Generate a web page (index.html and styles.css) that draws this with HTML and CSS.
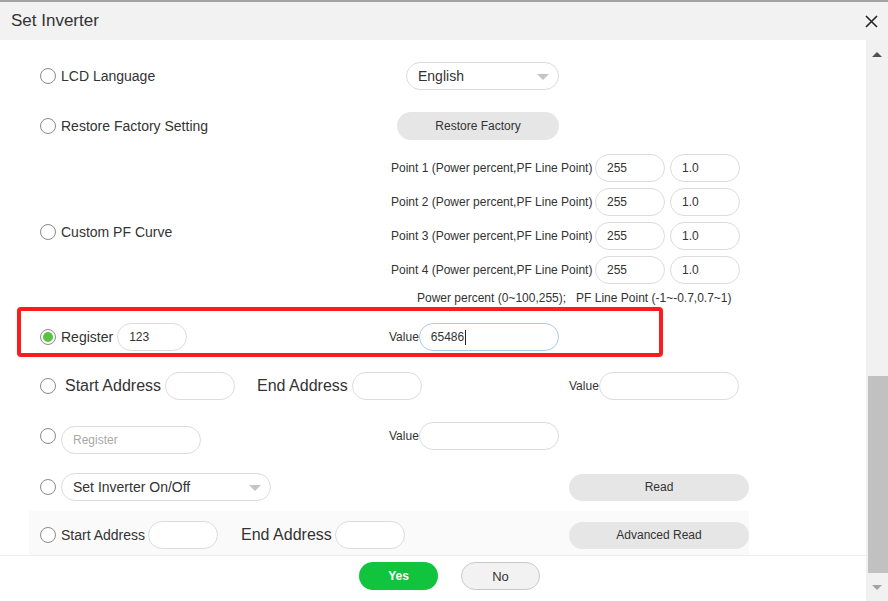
FILE: index.html
```html
<!DOCTYPE html>
<html>
<head>
<meta charset="utf-8">
<link rel="stylesheet" href="styles.css">
</head>
<body>
<div class="dialog">
  <div class="topline"></div>
  <div class="header">
    <span class="title">Set Inverter</span>
    <svg class="close" width="13" height="13" viewBox="0 0 13 13"><path d="M1 1L12 12M12 1L1 12" stroke="#222" stroke-width="1.6" fill="none"/></svg>
  </div>
  <div class="body">
    <div class="panel">
      <div class="viewport">
        <div class="list">
          <div class="row h50">
            <div class="lead"></div>
            <div class="pill w152 ml17"></div>
          </div>
          <div class="row h50">
            <div class="lead"><span class="radio"></span><span class="lbl">LCD Language</span></div>
            <div class="pill select w152 ml17"><span>English</span><i class="caret"></i></div>
          </div>
          <div class="row h50">
            <div class="lead"><span class="radio"></span><span class="lbl">Restore Factory Setting</span></div>
            <div class="btn w161 ml8">Restore Factory</div>
          </div>
          <div class="row pf">
            <div class="lead"><span class="radio"></span><span class="lbl">Custom PF Curve</span></div>
            <div class="points">
              <div class="point"><span class="plbl">Point 1 (Power percent,PF Line Point)</span><div class="pill w70 ml3">255</div><div class="pill w70 ml5">1.0</div></div>
              <div class="point"><span class="plbl">Point 2 (Power percent,PF Line Point)</span><div class="pill w70 ml3">255</div><div class="pill w70 ml5">1.0</div></div>
              <div class="point"><span class="plbl">Point 3 (Power percent,PF Line Point)</span><div class="pill w70 ml3">255</div><div class="pill w70 ml5">1.0</div></div>
              <div class="point"><span class="plbl">Point 4 (Power percent,PF Line Point)</span><div class="pill w70 ml3">255</div><div class="pill w70 ml5">1.0</div></div>
              <div class="note">Power percent (0~100,255);&nbsp;&nbsp;&nbsp;PF Line Point (-1~-0.7,0.7~1)</div>
            </div>
          </div>
          <div class="row h48">
            <div class="lead"><span class="radio on"></span><span class="lbl">Register</span><div class="pill w70 ml4">123</div></div>
            <span class="vlbl">Value</span><div class="pill focus w140"><span>65486</span><i class="cursor"></i></div>
          </div>
          <div class="row h48 shift">
            <div class="lead wide"><span class="radio"></span><span class="lbl big ml9">Start Address</span><div class="pill w70 ml4">&nbsp;</div><span class="lbl big ml22">End Address</span><div class="pill w70 ml4"></div></div>
            <span class="vlbl">Value</span><div class="pill w140"></div>
          </div>
          <div class="row h54">
            <div class="lead"><span class="radio"></span><div class="pill w140 ml5 low ph">Register</div></div>
            <span class="vlbl">Value</span><div class="pill w140"></div>
          </div>
          <div class="row h48">
            <div class="lead wide"><span class="radio"></span><div class="pill select w210 ml5"><span>Set Inverter On/Off</span><i class="caret"></i></div></div>
            <div class="btn w180 short">Read</div>
          </div>
          <div class="row h48 hover">
            <div class="lead wide"><span class="radio"></span><span class="lbl">Start Address</span><div class="pill w70 ml3"></div><span class="lbl big ml23">End Address</span><div class="pill w70 ml3"></div></div>
            <div class="btn w180 short">Advanced Read</div>
          </div>
        </div>
        <div class="mark"></div>
      </div>
      <div class="footer">
        <div class="yes">Yes</div>
        <div class="no">No</div>
      </div>
    </div>
    <div class="scrollbar">
      <div class="sb-up"><i class="tri-up"></i></div>
      <div class="sb-track"><div class="sb-thumb"></div></div>
      <div class="sb-down"><i class="tri-down"></i></div>
    </div>
  </div>
</div>
</body>
</html>
```

FILE: styles.css
```css
html, body {
  margin: 0;
  padding: 0;
  background: #fff;
}
body {
  width: 888px;
  height: 601px;
  overflow: hidden;
  font-family: "Liberation Sans", Arial, sans-serif;
  color: #333;
}
.dialog {
  width: 888px;
  height: 601px;
  display: flex;
  flex-direction: column;
}
.topline {
  height: 2px;
  background: #a3a3a3;
}
.header {
  height: 38px;
  background: #f2f2f2;
  display: flex;
  align-items: center;
  justify-content: space-between;
  padding: 0 10px 0 11px;
}
.title {
  font-size: 17px;
  color: #333;
}
.close {
  display: block;
}
.body {
  flex: 1;
  display: flex;
  min-height: 0;
}
.panel {
  width: 866px;
  display: flex;
  flex-direction: column;
}
.viewport {
  height: 515px;
  overflow: hidden;
  position: relative;
}
.list {
  margin-top: -39px;
}
.row {
  display: flex;
  align-items: center;
  margin-left: 29px;
  width: 720px;
  padding-left: 11px;
  box-sizing: border-box;
}
.h50 { height: 50px; }
.h48 { height: 48px; }
.h54 { height: 54px; }
.pf { height: 162px; }
.shift { padding-top: 2px; }
.hover { background: #fafafa; }
.lead {
  width: 349px;
  flex: none;
  display: flex;
  align-items: center;
}
.lead.wide { width: 529px; }
.radio {
  width: 14px;
  height: 14px;
  border: 1px solid #8a8a8a;
  border-radius: 50%;
  background: #fff;
  flex: none;
  margin-right: 5px;
  position: relative;
}
.radio.on::after {
  content: "";
  position: absolute;
  left: 2px;
  top: 2px;
  width: 10px;
  height: 10px;
  border-radius: 50%;
  background: #58c242;
}
.lbl {
  font-size: 14px;
  color: #333;
  white-space: nowrap;
}
.lbl.big { font-size: 16px; }
.ml3 { margin-left: 3px; }
.ml4 { margin-left: 4px; }
.ml5 { margin-left: 5px; }
.ml8 { margin-left: 8px; }
.ml9 { margin-left: 9px; }
.ml17 { margin-left: 17px; }
.ml22 { margin-left: 22px; }
.ml23 { margin-left: 23px; }
.radio + .ml9 { margin-left: 4px; }
.radio + .ml5 { margin-left: 0; }
.pill {
  height: 28px;
  box-sizing: border-box;
  border: 1px solid #dcdcdc;
  border-radius: 14px;
  background: #fff;
  font-size: 12px;
  color: #333;
  padding-left: 11px;
  display: flex;
  align-items: center;
  flex: none;
  position: relative;
}
.pill.focus { border-color: #a9cbe6; }
.pill.ph { color: #a9a9a9; }
.pill.low { margin-top: 8px; }
.select { font-size: 14px; }
.w70 { width: 70px; }
.w140 { width: 140px; }
.w152 { width: 153px; }
.w161 { width: 162px; }
.w180 { width: 180px; }
.w210 { width: 210px; }
.caret {
  position: absolute;
  right: 9px;
  top: 11px;
  width: 0;
  height: 0;
  border-left: 6px solid transparent;
  border-right: 6px solid transparent;
  border-top: 6px solid #c4c4c4;
}
.cursor {
  display: inline-block;
  width: 1px;
  height: 15px;
  background: #222;
  margin-left: 1px;
}
.btn {
  height: 28px;
  border-radius: 14px;
  background: #e6e6e6;
  font-size: 12px;
  color: #333;
  display: flex;
  align-items: center;
  justify-content: center;
  flex: none;
}
.btn.short { height: 27px; }
.points {
  display: flex;
  flex-direction: column;
  padding-top: 3px;
  align-self: flex-start;
}
.point {
  display: flex;
  align-items: center;
  height: 28px;
  margin-bottom: 6px;
  margin-left: 2px;
}
.plbl {
  font-size: 12px;
  color: #333;
  white-space: nowrap;
  width: 201px;
}
.note {
  font-size: 12px;
  color: #333;
  margin-left: 28px;
  margin-top: 1px;
  white-space: nowrap;
}
.vlbl {
  font-size: 12px;
  color: #333;
}
.mark {
  position: absolute;
  left: 17px;
  top: 267px;
  width: 638px;
  height: 42px;
  border: 4px solid #fb1d1d;
  border-radius: 4px;
}
.footer {
  height: 46px;
  box-sizing: border-box;
  border-top: 1px solid #ececec;
  display: flex;
  justify-content: center;
  align-items: flex-start;
  padding: 6px 0 0 33px;
  gap: 23px;
}
.yes, .no {
  width: 79px;
  height: 28px;
  box-sizing: border-box;
  border-radius: 14px;
  display: flex;
  align-items: center;
  justify-content: center;
}
.yes {
  background: #12c33e;
  color: #fff;
  font-size: 12px;
  font-weight: bold;
}
.no {
  background: #f2f2f2;
  border: 1px solid #c9c9c9;
  color: #333;
  font-size: 13px;
}
.scrollbar {
  width: 22px;
  background: #f1f1f1;
  display: flex;
  flex-direction: column;
}
.sb-up {
  height: 24px;
  display: flex;
  justify-content: center;
  align-items: flex-end;
}
.tri-up {
  width: 0;
  height: 0;
  border-left: 5px solid transparent;
  border-right: 5px solid transparent;
  border-bottom: 5px solid #505050;
  margin-bottom: 7px;
}
.sb-track {
  flex: 1;
  display: flex;
  flex-direction: column;
  justify-content: flex-end;
}
.sb-thumb {
  height: 197px;
  margin: 0 0 0 2px;
  background: #c1c1c1;
}
.sb-down {
  height: 28px;
  display: flex;
  justify-content: center;
  align-items: center;
}
.tri-down {
  width: 0;
  height: 0;
  border-left: 5px solid transparent;
  border-right: 5px solid transparent;
  border-top: 5px solid #a3a3a3;
}
```
